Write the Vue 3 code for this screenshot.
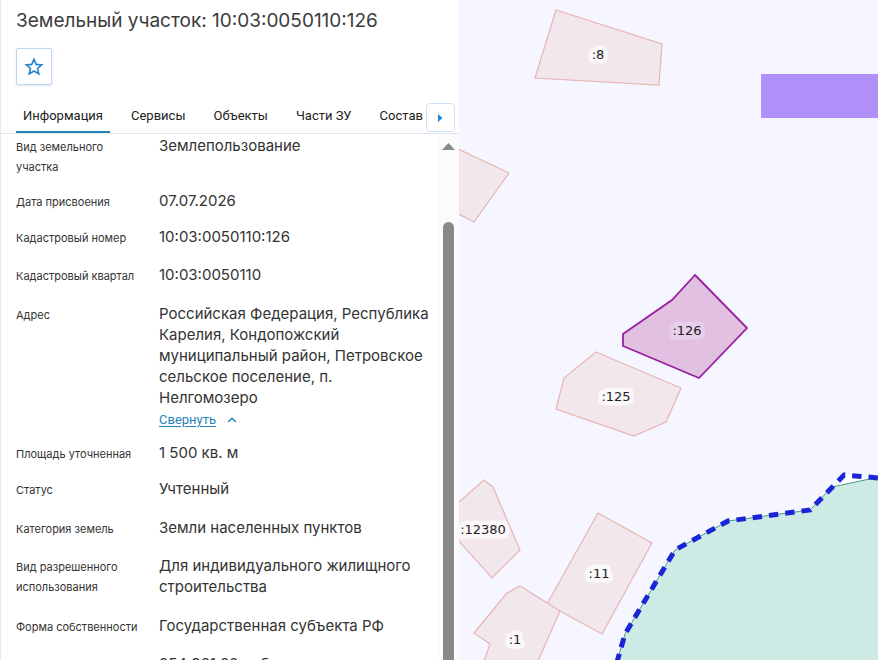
<script setup>
import { ref } from 'vue'

const tabs = ['Информация', 'Сервисы', 'Объекты', 'Части ЗУ', 'Состав']
const activeTab = ref('Информация')
const favourite = ref(false)
const expanded = ref(true)

const rows = [
  { label: 'Вид земельного участка', value: 'Землепользование', gap: 'dense' },
  { label: 'Дата присвоения', value: '07.07.2026', gap: 'tight' },
  { label: 'Кадастровый номер', value: '10:03:0050110:126', gap: 'snug' },
  { label: 'Кадастровый квартал', value: '10:03:0050110', gap: 'loose' },
  {
    label: 'Адрес',
    value: 'Российская Федерация, Республика Карелия, Кондопожский муниципальный район, Петровское сельское поселение, п. Нелгомозеро',
    gap: 'tight',
    collapsible: true
  },
  { label: 'Площадь уточненная', value: '1 500 кв. м', gap: 'tight' },
  { label: 'Статус', value: 'Учтенный', gap: 'loose' },
  { label: 'Категория земель', value: 'Земли населенных пунктов', gap: 'snug' },
  { label: 'Вид разрешенного использования', value: 'Для индивидуального жилищного строительства', gap: 'loose' },
  { label: 'Форма собственности', value: 'Государственная субъекта РФ', gap: 'snug' },
  { label: 'Кадастровая стоимость', value: '254 961.60 руб.', gap: 'snug' }
]

const parcels = [
  '97,10 203,44 200,85 76,78',
  '-20,140 50,173 15,222 -20,204',
  '137,352 222,388 207,422 175,436 97,409 105,378',
  '-10,511 25,480 34,487 61,550 33,578 -10,530',
  '139,513 193,543 143,634 88,604',
  '61,586 101,611 75,670 22,670 31,644 15,633 48,593'
]

const labels = [
  { text: ':8', x: 139, y: 59 },
  { text: ':125', x: 157, y: 401 },
  { text: ':12380', x: 24, y: 534 },
  { text: ':11', x: 140, y: 578 },
  { text: ':1', x: 56, y: 644 }
]
</script>

<template>
  <main class="viewer">
    <section class="panel">
      <header class="head">
        <h1 class="title">Земельный участок: 10:03:0050110:126</h1>
        <button class="star" type="button" aria-label="В избранное" :aria-pressed="favourite" @click="favourite = !favourite">
          <svg viewBox="0 0 20 20" width="20" height="20" aria-hidden="true">
            <path d="M10 2.3 L12.2 7.4 L17.7 7.9 L13.5 11.5 L14.8 16.9 L10 14 L5.2 16.9 L6.5 11.5 L2.3 7.9 L7.8 7.4 Z" :fill="favourite ? '#2583c5' : 'none'" stroke="#2583c5" stroke-width="1.6" stroke-linejoin="miter" />
          </svg>
        </button>
      </header>

      <nav class="tabs">
        <div class="strip">
          <button
            v-for="tab in tabs"
            :key="tab"
            type="button"
            class="tab"
            :class="{ active: tab === activeTab }"
            @click="activeTab = tab"
          >{{ tab }}</button>
        </div>
        <button class="next" type="button" aria-label="Следующие вкладки">
          <svg viewBox="0 0 6 8" width="6" height="8" aria-hidden="true"><path d="M0 0 L4.5 4 L0 8 Z" fill="#1e86e8" /></svg>
        </button>
      </nav>

      <div class="body">
        <dl class="list">
          <div v-for="row in rows" :key="row.label" class="row" :class="row.gap">
            <dt class="label">{{ row.label }}</dt>
            <dd class="value">
              <span :class="{ clipped: row.collapsible && !expanded }">{{ row.value }}</span>
              <a v-if="row.collapsible" href="#" class="toggle" @click.prevent="expanded = !expanded">
                <span class="toggle-text">{{ expanded ? 'Свернуть' : 'Развернуть' }}</span>
                <svg viewBox="0 0 10 6" width="10" height="6" aria-hidden="true"><path d="M1.2 5 L5 1.2 L8.8 5" fill="none" stroke="#2583b5" stroke-width="1.5" /></svg>
              </a>
            </dd>
          </div>
        </dl>
        <div class="scrollbar" aria-hidden="true">
          <svg viewBox="0 0 13 7" width="13" height="7"><path d="M6.5 0 L13 7 H0 Z" fill="#888888" /></svg>
          <div class="thumb"></div>
        </div>
      </div>
    </section>

    <section class="map">
      <svg class="canvas" role="img" aria-label="Карта участков">
        <path d="M302 74 H3000 V119 L302 118 Z" fill="#b090f8" />
        <path d="M388 475 L420 478 L375 488 Z" fill="#ffffff" />
        <path d="M158 662 L166 634 L216 550 L269 521 L351 510 L373 487 L420 477 H3000 V3000 H158 Z" fill="#cdeae5" stroke="#4c9d80" stroke-width="1" />
        <path d="M158 662 L166 634 L216 550 L269 521 L351 510 L385 475 L420 478" fill="none" stroke="#1a25d8" stroke-width="5" stroke-dasharray="9.4 7" stroke-dashoffset="1" />
        <polygon v-for="points in parcels" :key="points" class="parcel" :points="points" />
        <polygon class="selected" points="236,275 288,328 240,378 164,346 164,334 213,300" />
        <text v-for="item in labels" :key="item.text" class="mark" :x="item.x" :y="item.y">{{ item.text }}</text>
        <text class="mark mark-selected" x="228" y="335">:126</text>
      </svg>
    </section>
  </main>
</template>

<style>
body {
  overflow: hidden;
}
</style>

<style scoped>
.viewer {
  display: flex;
  height: 100vh;
  font-family: Inter, "Liberation Sans", sans-serif;
  color: #333333;
  background: #ffffff;
}

.panel {
  display: flex;
  flex-direction: column;
  box-sizing: border-box;
  width: 459px;
  flex-shrink: 0;
  border-left: 1px solid #dfeaf6;
  overflow: hidden;
}

.head {
  padding: 9px 15px 0;
}

.title {
  margin: 0 0 15px;
  font-size: 19px;
  line-height: 24px;
  font-weight: 400;
  color: #3c3c3c;
}

.star {
  display: flex;
  align-items: center;
  justify-content: center;
  box-sizing: border-box;
  width: 36px;
  height: 37px;
  padding: 0;
  border: 1px solid #c0d6ef;
  border-radius: 2px;
  background: #ffffff;
  box-shadow: 0 1px 3px #dfe8f4;
}

.tabs {
  display: flex;
  margin-top: 15px;
  padding: 0 4px 0 15px;
  border-bottom: 1px solid #e1e7ee;
}

.strip {
  display: flex;
  flex: 1;
  gap: 14px;
  min-width: 0;
  overflow: hidden;
}

.tab {
  height: 33px;
  padding: 1px 7px 0;
  border: 0;
  border-bottom: 2px solid transparent;
  background: none;
  font-family: Roboto, "Liberation Sans", sans-serif;
  font-size: 13px;
  line-height: 16px;
  color: #222222;
  white-space: nowrap;
}

.tab.active {
  border-bottom-color: #2583b5;
}

.next {
  display: flex;
  align-items: center;
  justify-content: center;
  box-sizing: border-box;
  width: 29px;
  height: 29px;
  margin: 3px 0 1px;
  padding: 0;
  border: 1px solid #cfe0f6;
  border-radius: 4px;
  background: #ffffff;
  flex-shrink: 0;
}

.body {
  display: flex;
  flex: 1;
  min-height: 0;
}

.list {
  flex: 1;
  min-width: 0;
  margin: 0;
  padding: 1px 8px 0 15px;
  overflow: hidden;
}

.row {
  display: grid;
  grid-template-columns: 125px 1fr;
  column-gap: 18px;
}

.dense {
  padding-bottom: 14px;
}

.tight {
  padding-bottom: 15px;
}

.snug {
  padding-bottom: 17px;
}

.loose {
  padding-bottom: 18px;
}

.label {
  margin-bottom: -1px;
  padding-top: 2px;
  font-size: 11px;
  line-height: 20px;
}

.value {
  margin: 0;
  font-size: 15px;
  line-height: 21px;
}

.clipped {
  display: block;
  overflow: hidden;
  text-overflow: ellipsis;
  white-space: nowrap;
}

.toggle {
  display: flex;
  align-items: center;
  gap: 11px;
  padding-top: 5px;
  font-family: Roboto, "Liberation Sans", sans-serif;
  font-size: 13px;
  line-height: 14px;
  color: #2583b5;
  text-decoration: none;
}

.toggle-text {
  text-decoration: underline;
  text-underline-offset: 2px;
}

.scrollbar {
  display: flex;
  flex-direction: column;
  align-items: center;
  width: 21px;
  padding-top: 9px;
  box-sizing: border-box;
  background: #fbfbfc;
}

.thumb {
  flex: 1;
  width: 11px;
  margin-top: 72px;
  border-radius: 6px 6px 0 0;
  background: #888888;
}

.map {
  flex: 1;
  min-width: 0;
  background: #f5f6ff;
}

.canvas {
  display: block;
  width: 100%;
  height: 100%;
}

.parcel {
  fill: #f3e7ee;
  stroke: #e8b4b4;
  stroke-width: 1.2;
}

.selected {
  fill: #e1c0e2;
  stroke: #9a1fa0;
  stroke-width: 1.8;
}

.mark {
  font-family: "DejaVu Sans", sans-serif;
  font-size: 13px;
  text-anchor: middle;
  fill: #222222;
  stroke: #fbf8fb;
  stroke-width: 9px;
  stroke-linejoin: round;
  paint-order: stroke;
}

.mark-selected {
  stroke: #e7cfe9;
}
</style>
